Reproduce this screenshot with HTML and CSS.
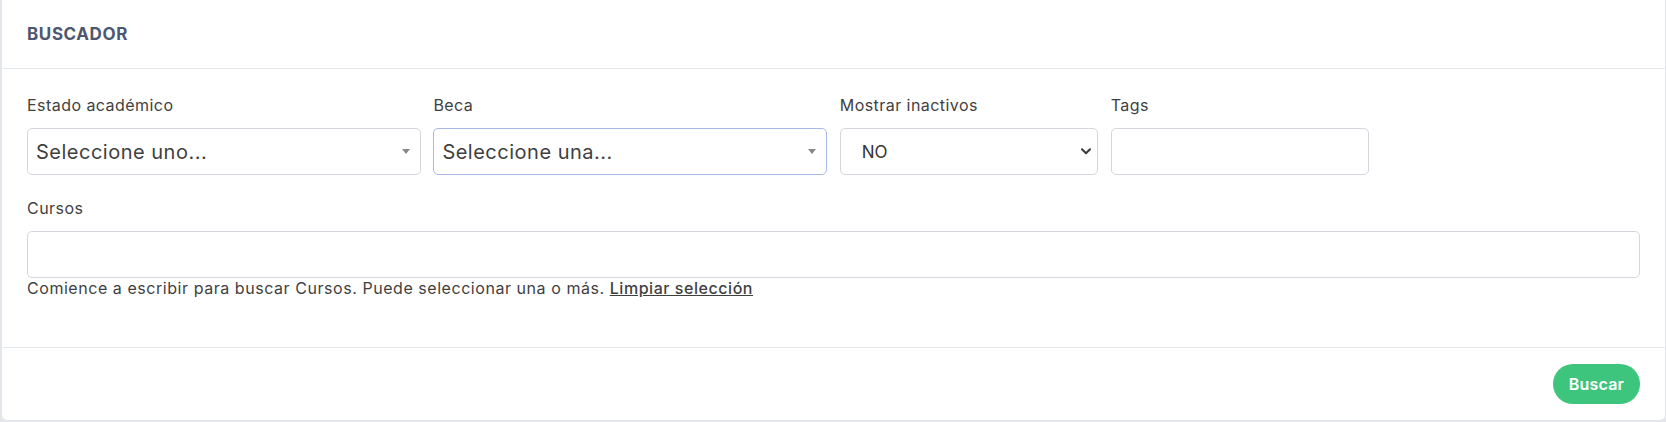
FILE: index.html
```html
<!DOCTYPE html>
<html lang="es">
<head>
<meta charset="utf-8">
<title>Buscador</title>
<link rel="stylesheet" href="styles.css">
</head>
<body>
<div class="card">
  <div class="card-header">
    <h2 class="card-title">BUSCADOR</h2>
  </div>
  <div class="card-body">
    <div class="row">
      <div class="field span-3">
        <label class="label">Estado académico</label>
        <div class="select2">
          <span class="select2-text">Seleccione uno...</span>
          <span class="select2-arrow"></span>
        </div>
      </div>
      <div class="field span-3">
        <label class="label">Beca</label>
        <div class="select2 focused">
          <span class="select2-text">Seleccione una...</span>
          <span class="select2-arrow"></span>
        </div>
      </div>
      <div class="field span-2">
        <label class="label">Mostrar inactivos</label>
        <div class="native-select">
          <span class="native-text">NO</span>
          <svg class="chevron" width="10" height="7" viewBox="0 0 10 7"><path d="M1 1.2 L5 5.2 L9 1.2" fill="none" stroke="#343a40" stroke-width="2" stroke-linecap="round" stroke-linejoin="round"/></svg>
        </div>
      </div>
      <div class="field span-2">
        <label class="label">Tags</label>
        <div class="input"></div>
      </div>
    </div>
    <div class="row row-cursos">
      <div class="field span-12">
        <label class="label">Cursos</label>
        <div class="input"></div>
        <div class="help">Comience a escribir para buscar Cursos. Puede seleccionar una o más. <a class="help-link">Limpiar selección</a></div>
      </div>
    </div>
  </div>
  <div class="card-footer">
    <button class="btn">Buscar</button>
  </div>
</div>
</body>
</html>
```

FILE: styles.css
```css
* { box-sizing: border-box; }
html, body { margin: 0; padding: 0; }
body {
  background: #e4e6eb;
  font-family: "Inter", "Liberation Sans", sans-serif;
  color: #3f3f3f;
  height: 422px;
  overflow: hidden;
}
.card {
  margin: 0 1px 0 2px;
  height: 420px;
  background: #fff;
  border-radius: 0 0 5px 5px;
  display: flex;
  flex-direction: column;
}
.card-header {
  height: 69px;
  padding: 0 25px;
  display: flex;
  align-items: center;
  border-bottom: 1px solid #e3e7ee;
}
.card-title {
  margin: 0;
  font-size: 17px;
  font-weight: 700;
  color: #4e5670;
  letter-spacing: 0.6px;
}
.card-body {
  padding: 25px 25px 0 25px;
  height: 279px;
  border-bottom: 1px solid #e3e7ee;
}
.row {
  display: grid;
  grid-template-columns: repeat(12, 1fr);
  column-gap: 12.5px;
}
.row-cursos { margin-top: 21.5px; }
.span-3 { grid-column: span 3; }
.span-2 { grid-column: span 2; }
.span-12 { grid-column: span 12; }
.field { display: flex; flex-direction: column; }
.label {
  font-size: 16px;
  letter-spacing: 0.45px;
  line-height: 22px;
  color: #3f3f3f;
  margin-bottom: 12px;
}
.select2, .native-select, .input {
  height: 47px;
  border: 1px solid #d5d7de;
  border-radius: 5px;
  background: #fff;
  display: flex;
  align-items: center;
}
.select2 { padding: 0 10px 0 8px; justify-content: space-between; }
.select2.focused { border-color: #a9b8e6; }
.select2-text {
  font-size: 20px;
  letter-spacing: 0.5px;
  color: #3f3f3f;
}
.select2-arrow {
  width: 0;
  height: 0;
  border-style: solid;
  border-width: 5px 4px 0 4px;
  border-color: #888 transparent transparent transparent;
}
.native-select { padding: 0 6px 0 21px; justify-content: space-between; }
.native-text { font-size: 17px; color: #333; }
.help {
  font-size: 16px;
  letter-spacing: 0.55px;
  line-height: 21px;
  color: #3f3f3f;
}
.help-link {
  color: #3f3f3f;
  font-weight: 500;
  text-decoration: underline;
}
.card-footer {
  flex: 1;
  padding: 16px 25px 0 25px;
  display: flex;
  justify-content: flex-end;
  align-items: flex-start;
}
.btn {
  height: 40px;
  width: 87px;
  border: 0;
  border-radius: 20px;
  background: #3ec57d;
  color: #fff;
  font-family: "Inter", "Liberation Sans", sans-serif;
  font-size: 16px;
  letter-spacing: 0.2px;
  font-weight: 600;
  padding: 0;
}
```
